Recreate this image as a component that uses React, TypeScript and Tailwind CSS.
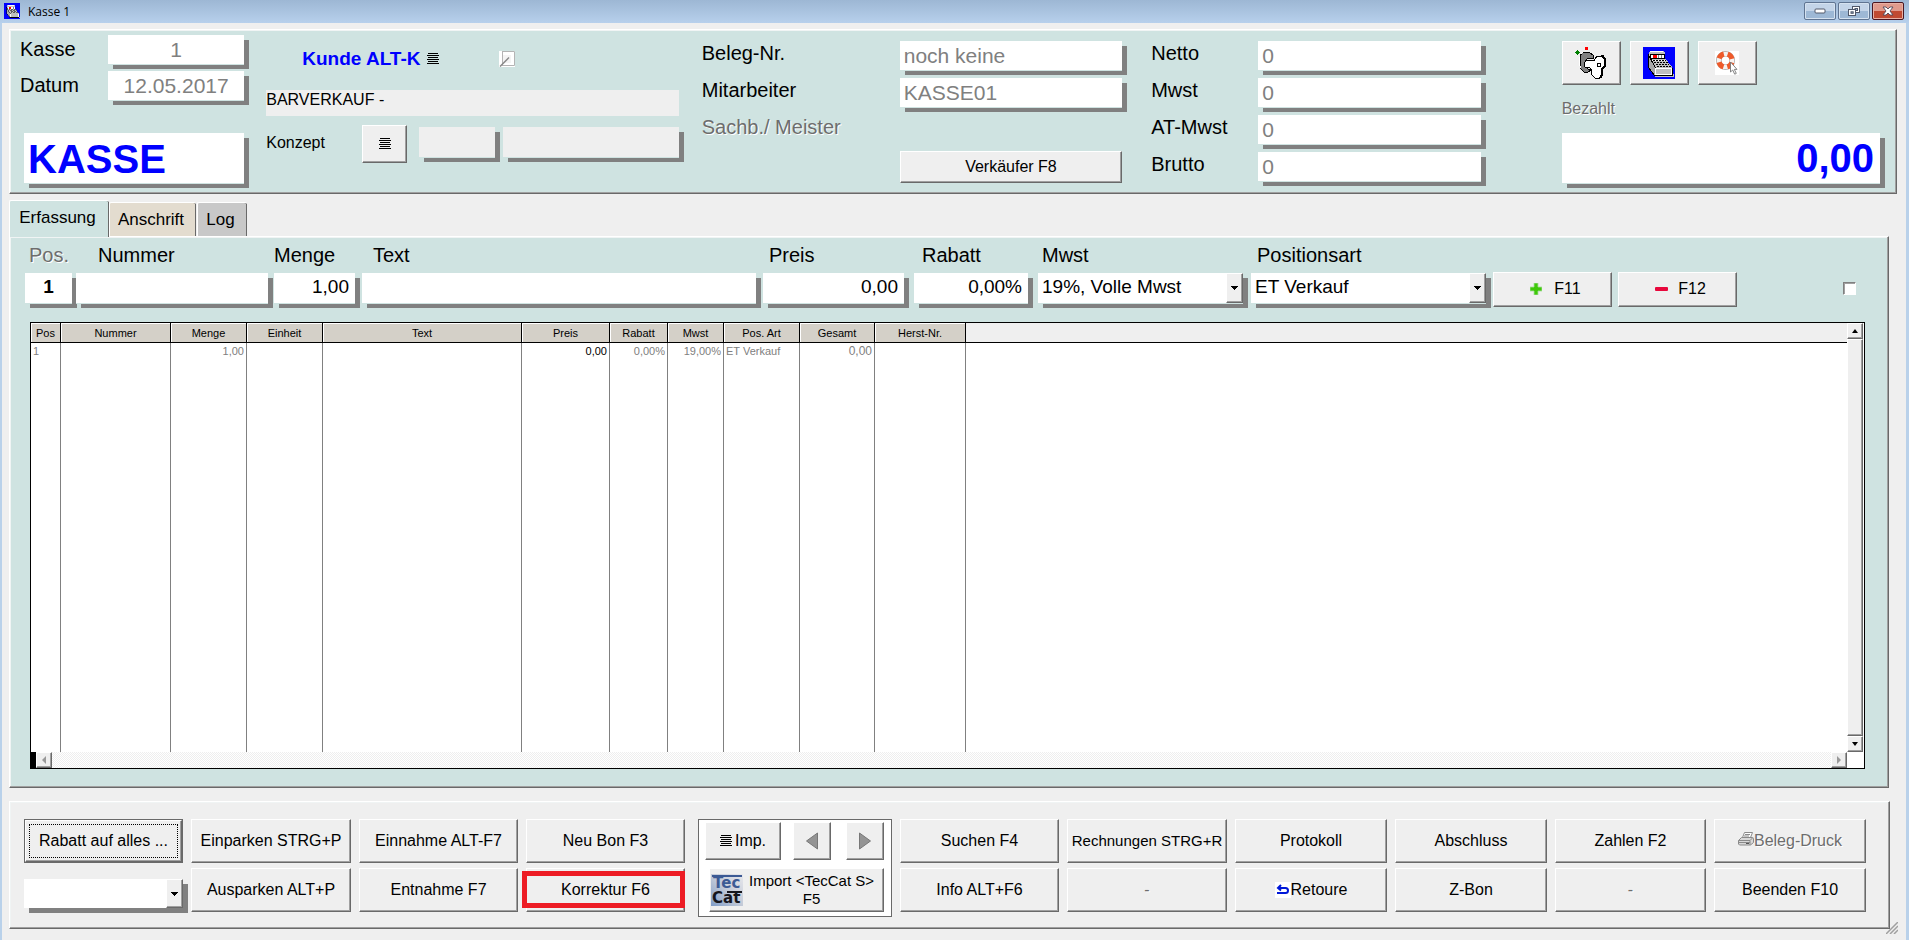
import React from 'react';
import clsx from 'clsx';

const BEVEL =
  'bg-[#efefef] border border-t-white border-l-white border-r-[#696969] border-b-[#696969] shadow-[inset_-1px_-1px_0_#a0a0a0]';
const PANEL =
  'border border-t-white border-l-white border-r-[#696969] border-b-[#696969] shadow-[inset_-1px_-1px_0_#a0a0a0,inset_1px_1px_0_#f0f4f4]';
const DROP = 'shadow-[0_1px_0_#cfe3e1,5px_5px_0_#808080]';
const ETCHED = 'text-[#6d6d6d] [text-shadow:1px_1px_0_#fff]';

interface ButtonProps {
  children?: React.ReactNode;
  className?: string;
  label?: string;
  disabled?: boolean;
}

const Button = ({ children, className, label, disabled }: ButtonProps) => (
  <button
    type="button"
    aria-label={label}
    disabled={disabled}
    className={clsx('flex items-center whitespace-nowrap', BEVEL, disabled && ETCHED, className ?? 'justify-center')}
  >
    {children}
  </button>
);

const ListIcon = () => (
  <svg width="12" height="12" viewBox="0 0 12 12" shapeRendering="crispEdges" className="shrink-0">
    <path d="M1 0h10v1H1zM0 2h12v1H0zM1 4h10v1H1zM0 6h12v1H0zM1 8h10v1H1zM0 10h12v1H0z" fill="#000" />
  </svg>
);

const RegisterIcon = ({ size }: { size: number }) => (
  <svg width={size} height={size} viewBox="0 0 32 32" shapeRendering="crispEdges">
    <rect width="32" height="32" fill="#00f" />
    <path d="M6 5l1-1h14l1 2v5l7 9v9H12L5 20z" fill="#c0c0c0" />
    <path d="M5 7l7 13v9l-7-9z" fill="#a8a8a8" stroke="#000" strokeWidth="1" />
    <path d="M7 4h13v1H7z" fill="#fff" />
    <path d="M7 7h15v5H7z" fill="#000" />
    <path d="M8 8h13v3H8z" fill="#fff" />
    <path d="M10 8h4v3h-4z" fill="red" />
    <path d="M15 8h1v3h-1zM18 8h1v3h-1z" fill="#808080" />
    <path d="M9 13h14v1H9z" fill="#fff" />
    <path d="M10 13.500h13M11 15.500h14M13 17.500h13M14 19.500h14" stroke="#000" strokeDasharray="2 1" />
    <path d="M12 21h17v8H12z" fill="#fff" />
    <path d="M13 22h15v5H13z" fill="#c0c0c0" />
    <path d="M12 28h17v1H12zM29 21h1v8h-1z" fill="#000" />
    <path d="M12 29h19v1H12zM30 27h1v2h-1z" fill="#c0c0c0" />
  </svg>
);

const KeyIcon = () => (
  <svg width="34" height="34" viewBox="0 0 34 34" shapeRendering="crispEdges">
    <path d="M1 6h5v1H1zM3 4h1v5H3zM2 5h3v3H2z" fill="#008000" />
    <rect x="11" y="1" width="3" height="3" fill="red" />
    <path d="M9 6h6l4 3v3h-5l-3 3v5l3 3 3 1-3 2h-4l-4-4V10z" fill="#808080" stroke="#000" />
    <path d="M7 8l2-2M5 11v7l2 4" stroke="#fff" fill="none" />
    <path d="M13 14h3l4 1 3-5h5l3 4v6l-3 3v6l-2 3h-5l-4-4v-5l-2-2-3 1-2-2v-3z" fill="#fff" stroke="#000" />
    <path d="M28 9l3 4v7l-3 3v6l-2 3" stroke="#000" strokeWidth="2" fill="none" />
    <rect x="23" y="17" width="4" height="4" fill="#000" />
    <rect x="24" y="18" width="2" height="2" fill="#fff" />
  </svg>
);

const HelpIcon = () => (
  <svg width="24" height="24" viewBox="0 0 24 24">
    <rect width="24" height="24" fill="#fff" />
    <circle cx="10.500" cy="9.500" r="6.700" fill="none" stroke="#a9a4a2" strokeWidth="5.600" />
    <circle cx="10.500" cy="9.500" r="6.700" fill="none" stroke="#f6f2f0" strokeWidth="4.200" />
    <circle
      cx="10.500"
      cy="9.500"
      r="6.700"
      fill="none"
      stroke="#ee5a2a"
      strokeWidth="5"
      strokeDasharray="6.600 3.924"
      strokeDashoffset="-2"
    />
    <path d="M15.500 11v10l2.200-2 2 4.200 1.600-.8-2-4H22z" fill="#fff" stroke="#777" strokeWidth=".9" />
  </svg>
);

const PrinterIcon = () => (
  <svg width="16" height="16" viewBox="0 0 16 16" fill="none" stroke="#8a8a8a" className="mb-1 shrink-0">
    <path d="M4.500 6.500l2-5h8l-2 5z" fill="#fff" />
    <path d="M7 3.500h5M6 5h5" />
    <path d="M.5 9.500l3-3h11l1 1v4l-3 2.500h-11l-1-1z" fill="#d8d8d8" />
    <path d="M.5 9.500h11.500l3-3M12 9.500v4.500M1 11.500h11" />
    <path d="M8 12.500h3" stroke="#555" />
  </svg>
);

const UndoIcon = () => (
  <svg width="16" height="16" viewBox="0 0 16 16" className="shrink-0">
    <rect width="16" height="16" fill="#fff" />
    <path d="M3 6h7.500q2.500 0 2.500 2.500T10.500 11H2" fill="none" stroke="#0018d8" strokeWidth="2" />
    <path d="M6 3L3 6l3 2.500" fill="none" stroke="#0018d8" strokeWidth="2" />
  </svg>
);

const TecCatLogo = () => (
  <svg width="32" height="32" viewBox="0 0 32 32" className="shrink-0">
    <defs>
      <linearGradient id="tec" x1="0" y1="1" x2="1" y2="0">
        <stop offset="0" stopColor="#7f9cc8" />
        <stop offset=".5" stopColor="#c3cad8" />
        <stop offset="1" stopColor="#e8e8ec" />
      </linearGradient>
    </defs>
    <rect width="32" height="32" fill="url(#tec)" />
    <rect x="1" y="1" width="30" height="2" fill="#3c5a94" />
    <g fontFamily="DejaVu Sans, sans-serif" fontSize="15" fontWeight="700">
      <text x="2" y="14" fill="#3c5a94">Tec</text>
      <text x="1" y="29" fill="#15151c">Cat</text>
    </g>
    <rect x="16" y="17" width="15" height="2" fill="#15151c" />
  </svg>
);

interface InfoFieldProps {
  id: string;
  label: string;
  value: string;
  labelClass: string;
  center?: boolean;
}

const InfoField = ({ id, label, value, labelClass, center }: InfoFieldProps) => (
  <div className="flex items-start">
    <label htmlFor={id} className={clsx('shrink-0 text-[20px]', labelClass)}>
      {label}
    </label>
    <input
      id={id}
      readOnly
      defaultValue={value}
      className={clsx('h-[29px] min-w-0 flex-1 bg-white px-1 text-[21px] text-[#808080]', DROP, center && 'text-center')}
    />
  </div>
);

const ArrowDown = () => (
  <span
    className={clsx('pointer-events-none absolute inset-y-0 right-0 flex w-[17px] items-center justify-center', BEVEL)}
  >
    <svg width="7" height="4" viewBox="0 0 7 4" shapeRendering="crispEdges">
      <path d="M0 0h7v1H0zM1 1h5v1H1zM2 2h3v1H2zM3 3h1v1H3z" />
    </svg>
  </span>
);

interface EntryProps {
  id: string;
  label: string;
  value: string;
  options?: boolean;
  labelClass?: string;
  className?: string;
  inputClass?: string;
}

const Entry = ({ id, label, value, options, labelClass, className, inputClass }: EntryProps) => (
  <div className={clsx('min-w-0', className)}>
    <label htmlFor={id} className={clsx('mb-1.5 block text-[20px] leading-6', labelClass)}>
      {label}
    </label>
    {options ? (
      <div className={clsx('relative h-[30px]', DROP)}>
        <select id={id} className="block h-full w-full appearance-none bg-white pb-0.5 pl-1 text-[19px]">
          <option>{value}</option>
        </select>
        <ArrowDown />
      </div>
    ) : (
      <input
        id={id}
        defaultValue={value}
        className={clsx('block h-[30px] w-full bg-white px-1.5 pb-0.5 text-[19px]', DROP, inputClass)}
      />
    )}
  </div>
);

interface Column {
  title: string;
  width: string;
  value: string;
  cell?: string;
}

const columns: Column[] = [
  { title: 'Pos', width: 'w-[30px]', value: '1' },
  { title: 'Nummer', width: 'w-[110px]', value: '' },
  { title: 'Menge', width: 'w-[76px]', value: '1,00', cell: 'text-right' },
  { title: 'Einheit', width: 'w-[76px]', value: '' },
  { title: 'Text', width: 'w-[199px]', value: '' },
  { title: 'Preis', width: 'w-[88px]', value: '0,00', cell: 'text-right text-black' },
  { title: 'Rabatt', width: 'w-[58px]', value: '0,00%', cell: 'text-right' },
  { title: 'Mwst', width: 'w-[56px]', value: '19,00%', cell: 'text-right' },
  { title: 'Pos. Art', width: 'w-[76px]', value: 'ET Verkauf' },
  { title: 'Gesamt', width: 'w-[75px]', value: '0,00', cell: 'text-right text-xs' },
  { title: 'Herst-Nr.', width: 'w-[91px]', value: '' },
];

const ScrollButton = ({ label, path, color }: { label: string; path: string; color: string }) => (
  <Button label={label} className="size-4 shrink-0 justify-center">
    <svg width="8" height="8" viewBox="0 0 8 8">
      <path d={path} fill={color} />
    </svg>
  </Button>
);

const PositionTable = () => (
  <div className="mt-[19px] ml-[5px] flex min-h-0 flex-1 flex-col border border-black bg-white">
    <div className="flex min-h-0 flex-1">
      <div className="min-w-0 flex-1">
        <table className="h-full w-full table-fixed border-separate border-spacing-0 text-[11px] leading-4 text-[#808080]">
          <thead>
            <tr className="h-5">
              {columns.map(col => (
                <th
                  key={col.title}
                  className={clsx(
                    'border-r border-b border-black bg-[#d4d0c8] p-0 text-[11px] font-normal text-black shadow-[inset_1px_1px_0_#fff]',
                    col.width
                  )}
                >
                  {col.title}
                </th>
              ))}
              <td className="border-b border-black bg-[#efefef] p-0" />
            </tr>
          </thead>
          <tbody>
            <tr className="h-4">
              {columns.map(col => (
                <td key={col.title} className={clsx('border-r border-[#808080] px-0.5 py-0 whitespace-nowrap', col.cell)}>
                  {col.value}
                </td>
              ))}
              <td />
            </tr>
            <tr>
              {columns.map(col => (
                <td key={col.title} className="border-r border-[#808080] p-0" />
              ))}
              <td />
            </tr>
          </tbody>
        </table>
      </div>
      <div className="mr-px flex w-4 flex-col">
        <ScrollButton label="Nach oben" path="M4 2l3 4H1z" color="#000" />
        <div className={clsx('flex-1', BEVEL)} />
        <ScrollButton label="Nach unten" path="M1 2h6L4 6z" color="#000" />
      </div>
    </div>
    <div className="flex h-4">
      <div className="w-[5px] bg-black" />
      <ScrollButton label="Nach links" path="M6 0v8L2 4z" color="#999" />
      <div className="flex-1 bg-[repeating-conic-gradient(#ffffff_0_25%,#eeeeee_0_50%)] bg-[length:2px_2px]" />
      <ScrollButton label="Nach rechts" path="M2 0v8l4-4z" color="#999" />
      <div className="w-[17px]" />
    </div>
  </div>
);

const TitleBar = () => (
  <header className="flex h-[23px] items-start bg-linear-to-b from-[#9db7d4] to-[#b7d0ec] pr-[5px] pl-1">
    <div className="mt-[3px]">
      <RegisterIcon size={16} />
    </div>
    <h1 className="ml-2 flex-1 font-['Open_Sans',sans-serif] text-xs leading-6 font-normal">Kasse 1</h1>
    <div className="mt-0.5 flex gap-0.5">
      <button
        type="button"
        aria-label="Minimieren"
        className="flex h-[18px] w-8 items-center justify-center rounded-xs border border-[#5f7491] bg-linear-to-b from-[#c3d4e8] from-50% to-[#9db8d5] to-50% shadow-[inset_0_0_0_1px_#d5e2f0]"
      >
        <svg width="12" height="6" viewBox="0 0 12 6">
          <rect x="1" y="1" width="10" height="4" rx="1" fill="#fff" stroke="#50586a" />
        </svg>
      </button>
      <button
        type="button"
        aria-label="Verkleinern"
        className="flex h-[18px] w-8 items-center justify-center rounded-xs border border-[#5f7491] bg-linear-to-b from-[#c3d4e8] from-50% to-[#9db8d5] to-50% shadow-[inset_0_0_0_1px_#d5e2f0]"
      >
        <svg width="12" height="12" viewBox="0 0 12 12" stroke="#50586a" fill="#fff">
          <rect x="4.500" y="1.500" width="7" height="6" />
          <rect x="7" y="3.500" width="2.500" height="2" fill="#9db8d5" />
          <rect x=".5" y="4.500" width="7" height="6" />
          <rect x="3" y="6.800" width="2.200" height="1.500" fill="#9db8d5" />
        </svg>
      </button>
      <button
        type="button"
        aria-label="Schließen"
        className="flex h-[18px] w-8 items-center justify-center rounded-xs border border-[#4b1620] bg-linear-to-b from-[#e09a8c] from-50% to-[#c04a32] to-50% shadow-[inset_0_0_0_1px_#e8b0a4]"
      >
        <svg width="12" height="10" viewBox="0 0 12 10">
          <path d="M1 1h3l2 2 2-2h3L8 5l3 4H8L6 7 4 9H1l3-4z" fill="#fff" stroke="#50485a" strokeWidth=".9" />
        </svg>
      </button>
    </div>
  </header>
);

const HeaderPanel = () => (
  <section
    className={clsx('mt-1.5 mr-[9px] grid grid-cols-[246fr_435fr_449fr_410fr_334fr] bg-[#cfe3e1] pb-2.5 pl-2.5', PANEL)}
  >
    <div className="flex min-w-0 flex-col gap-[7px] pt-[5px] pr-[22px]">
      <InfoField id="kasse" label="Kasse" value="1" labelClass="w-[88px] leading-7" center />
      <InfoField id="datum" label="Datum" value="12.05.2017" labelClass="w-[88px] leading-7" center />
      <div className={clsx('mt-auto ml-1 h-[50px] bg-white px-1 text-[40px] leading-[52px] font-bold text-[#0000ff]', DROP)}>
        KASSE
      </div>
    </div>

    <div className="min-w-0 pt-[17px] pr-[23px]">
      <div className="flex h-6 items-center pl-9">
        <button type="button" className="flex items-center gap-[7px] text-[19px] font-bold text-[#0000ff]">
          Kunde ALT-K
          <ListIcon />
        </button>
        <button type="button" aria-label="Kunde bearbeiten" className="ml-[60px]">
          <svg width="16" height="16" viewBox="0 0 16 16" fill="none">
            <rect width="16" height="16" fill="#fff" />
            <path d="M3.500 1v14M3 .5h12.500v14H3" stroke="#b4b4b4" />
            <path d="M4 4h8v8H4z" fill="#f4f4f4" />
            <path d="M1 15.500l9-9" stroke="#888" strokeWidth="1.500" />
          </svg>
        </button>
      </div>
      <p className="mt-[19px] h-[26px] bg-[#efefef] text-base leading-[19px]">BARVERKAUF -</p>
      <div className="mt-[9px] flex items-start">
        <label htmlFor="konzept" className="w-24 text-base leading-9">
          Konzept
        </label>
        <Button label="Konzept auswählen" className="h-[38px] w-[45px] justify-center">
          <ListIcon />
        </Button>
        <input id="konzept" className={clsx('mt-0.5 ml-3 h-[30px] w-[76px] bg-[#efefef] px-1', DROP)} />
        <input
          aria-label="Konzept Bezeichnung"
          className={clsx('mt-0.5 ml-2 h-[30px] min-w-0 flex-1 bg-[#efefef] px-1', DROP)}
        />
      </div>
    </div>

    <div className="flex min-w-0 flex-col gap-2 pt-[11px] pr-[29px]">
      <InfoField id="beleg" label="Beleg-Nr." value="noch keine" labelClass="w-[198px] leading-[25px]" />
      <InfoField id="mitarbeiter" label="Mitarbeiter" value="KASSE01" labelClass="w-[198px] leading-[25px]" />
      <span className={clsx('h-7 text-[20px] leading-6', ETCHED)}>Sachb./ Meister</span>
      <Button className="ml-[198px] h-8 justify-center text-base">Verkäufer F8</Button>
    </div>

    <div className="flex min-w-0 flex-col gap-2 pt-[11px] pr-[81px]">
      <InfoField id="netto" label="Netto" value="0" labelClass="w-[107px] leading-[25px]" />
      <InfoField id="mwst" label="Mwst" value="0" labelClass="w-[107px] leading-[25px]" />
      <InfoField id="atmwst" label="AT-Mwst" value="0" labelClass="w-[107px] leading-[25px]" />
      <InfoField id="brutto" label="Brutto" value="0" labelClass="w-[107px] leading-[25px]" />
    </div>

    <div className="flex min-w-0 flex-col pt-[11px] pr-4">
      <div className="flex gap-[9px]">
        <Button label="Schlüssel" className="h-11 w-[59px] justify-center">
          <KeyIcon />
        </Button>
        <Button label="Kasse öffnen" className="h-11 w-[59px] justify-center">
          <RegisterIcon size={32} />
        </Button>
        <Button label="Hilfe" className="h-11 w-[59px] justify-center">
          <HelpIcon />
        </Button>
      </div>
      <label htmlFor="bezahlt" className={clsx('mt-3 text-base leading-6', ETCHED)}>
        Bezahlt
      </label>
      <input
        id="bezahlt"
        readOnly
        defaultValue="0,00"
        className={clsx('mt-auto h-[50px] w-full bg-white px-1.5 text-right text-[40px] font-bold text-[#0000ff]', DROP)}
      />
    </div>
  </section>
);

const Tabs = () => (
  <nav role="tablist" className="relative z-10 mt-1.5 flex items-end text-[17px]">
    <button
      type="button"
      role="tab"
      aria-selected="true"
      className="-mb-px h-[37px] w-[100px] rounded-t-xs border-t border-l border-white bg-[#cfe3e1] pr-1 pb-0.5 shadow-[inset_-1px_0_0_#696969]"
    >
      Erfassung
    </button>
    <button
      type="button"
      role="tab"
      aria-selected="false"
      className="h-[34px] w-[87px] rounded-t-xs border-t border-l border-white bg-[#e3dccf] pr-1 shadow-[inset_-1px_0_0_#696969]"
    >
      Anschrift
    </button>
    <button
      type="button"
      role="tab"
      aria-selected="false"
      className="ml-px h-[34px] w-[50px] rounded-t-xs border-t border-l border-white bg-[#c8c8c8] pr-1 shadow-[inset_-1px_0_0_#696969]"
    >
      Log
    </button>
  </nav>
);

const EntryPanel = () => (
  <section className={clsx('mr-[17px] flex min-h-0 flex-1 flex-col bg-[#cfe3e1] pt-1.5 pr-[23px] pb-[18px] pl-[15px]', PANEL)}>
    <div className="grid grid-cols-[51fr_198fr_88fr_401fr_151fr_124fr_213fr_242fr_125fr_125fr_122fr] items-end">
      <Entry
        id="pos"
        label="Pos."
        value="1"
        labelClass={clsx('pl-1', ETCHED)}
        className="pr-1"
        inputClass="text-center font-bold"
      />
      <Entry id="nummer" label="Nummer" value="" labelClass="pl-[22px]" className="pr-1.5" />
      <Entry id="menge" label="Menge" value="1,00" className="pr-[7px]" inputClass="text-right" />
      <Entry id="text" label="Text" value="" labelClass="pl-[11px]" className="pr-[7px]" />
      <Entry id="preis" label="Preis" value="0,00" labelClass="pl-1.5" className="pr-2.5" inputClass="text-right" />
      <Entry id="rabatt" label="Rabatt" value="0,00%" labelClass="pl-2" className="pr-2.5" inputClass="text-right" />
      <Entry id="satz" label="Mwst" value="19%, Volle Mwst" options labelClass="pl-1" className="pr-2" />
      <Entry id="art" label="Positionsart" value="ET Verkauf" options labelClass="pl-1.5" className="pr-[7px]" />
      <Button className="-mb-1 mr-1.5 h-[35px] justify-center gap-3 pb-0.5 pl-1.5 text-base">
        <svg width="12" height="12" viewBox="0 0 12 12">
          <path d="M4 0h4v4h4v4H8v4H4V8H0V4h4z" fill="#3fc80a" stroke="#a8dca0" strokeWidth=".8" />
        </svg>
        F11
      </Button>
      <Button className="-mb-1 mr-1.5 h-[35px] justify-center gap-2.5 pb-0.5 pl-1.5 text-base">
        <svg width="13" height="4" viewBox="0 0 13 4">
          <rect width="13" height="4" rx="1" fill="#e8083c" />
        </svg>
        F12
      </Button>
      <input
        type="checkbox"
        aria-label="Option"
        className="mr-[9px] mb-2 size-[13px] appearance-none justify-self-end border border-t-[#808080] border-r-white border-b-white border-l-[#808080] bg-white shadow-[inset_1px_1px_0_#a0a0a0]"
      />
    </div>
    <PositionTable />
  </section>
);

const ActionBar = () => (
  <footer
    className={clsx(
      'mt-[13px] mr-4 grid grid-flow-col grid-cols-[159fr_160fr_159fr_159fr_199fr_159fr_160fr_152fr_152fr_151fr_152fr] grid-rows-[44px_44px] gap-x-2 gap-y-[5px] pt-[17px] pr-[23px] pb-4 pl-3.5 text-base',
      PANEL
    )}
  >
    <div className="flex border border-[#696969]">
      <Button className="flex-1 p-[3px]">
        <span className="flex h-full w-full items-center justify-center border border-dotted border-black">
          Rabatt auf alles ...
        </span>
      </Button>
    </div>
    <div className="relative mt-[11px] h-[29px] shadow-[5px_5px_0_#808080]">
      <select aria-label="Rabatt" className="block h-full w-full appearance-none bg-white pl-1" />
      <ArrowDown />
    </div>
    <Button>Einparken STRG+P</Button>
    <Button>Ausparken ALT+P</Button>
    <Button>Einnahme ALT-F7</Button>
    <Button>Entnahme F7</Button>
    <Button>Neu Bon F3</Button>
    <div className="relative flex">
      <Button className="flex-1 justify-center">Korrektur F6</Button>
      <div className="pointer-events-none absolute top-[3px] right-0 bottom-1 -left-1 border-5 border-[#ed1c24]" />
    </div>

    <div className="row-span-2 -mb-[5px] ml-[5px] flex flex-col border border-[#696969] bg-white pt-0.5 pr-[7px] pl-1.5">
      <div className="flex">
        <Button className="h-[38px] w-[76px] justify-center gap-[3px]">
          <ListIcon />
          Imp.
        </Button>
        <Button label="Zurück" className="ml-auto h-[38px] w-[38px] justify-center">
          <svg width="12" height="18" viewBox="0 0 12 18">
            <path d="M11.500 1v16L.5 9z" fill="#949494" stroke="#777" />
          </svg>
        </Button>
        <Button label="Weiter" className="ml-[15px] h-[38px] w-[38px] justify-center">
          <svg width="12" height="18" viewBox="0 0 12 18">
            <path d="M.5 1v16l11-8z" fill="#949494" stroke="#777" />
          </svg>
        </Button>
      </div>
      <Button className="mt-2 ml-1 h-11 gap-1.5 pl-px text-[15px] leading-[18px]">
        <TecCatLogo />
        <span>
          Import &lt;TecCat S&gt;
          <br />
          F5
        </span>
      </Button>
    </div>

    <Button>Suchen F4</Button>
    <Button>Info ALT+F6</Button>
    <Button className="justify-center text-[15px]">Rechnungen STRG+R</Button>
    <Button disabled>-</Button>
    <Button>Protokoll</Button>
    <Button>
      <UndoIcon />
      Retoure
    </Button>
    <Button>Abschluss</Button>
    <Button>Z-Bon</Button>
    <Button>Zahlen F2</Button>
    <Button disabled>-</Button>
    <Button disabled>
      <PrinterIcon />
      Beleg-Druck
    </Button>
    <Button>Beenden F10</Button>
  </footer>
);

const App = () => (
  <div className="flex h-screen min-h-[640px] flex-col bg-[#b9d1ea] font-['Liberation_Sans',Arial,sans-serif] text-black">
    <TitleBar />
    <main className="mr-[3px] ml-0.5 flex min-h-0 flex-1 flex-col bg-[#efefef] pl-[7px]">
      <HeaderPanel />
      <Tabs />
      <EntryPanel />
      <ActionBar />
      <div className="flex h-[11px] shrink-0 items-end justify-end pr-2 pb-1.5">
        <svg width="12" height="12" viewBox="0 0 12 12" stroke="#a0a0a0" strokeWidth="1.500" className="shrink-0">
          <path d="M0 12L12 0M4 12l8-8M8 12l4-4" />
        </svg>
      </div>
    </main>
  </div>
);

export default App;
